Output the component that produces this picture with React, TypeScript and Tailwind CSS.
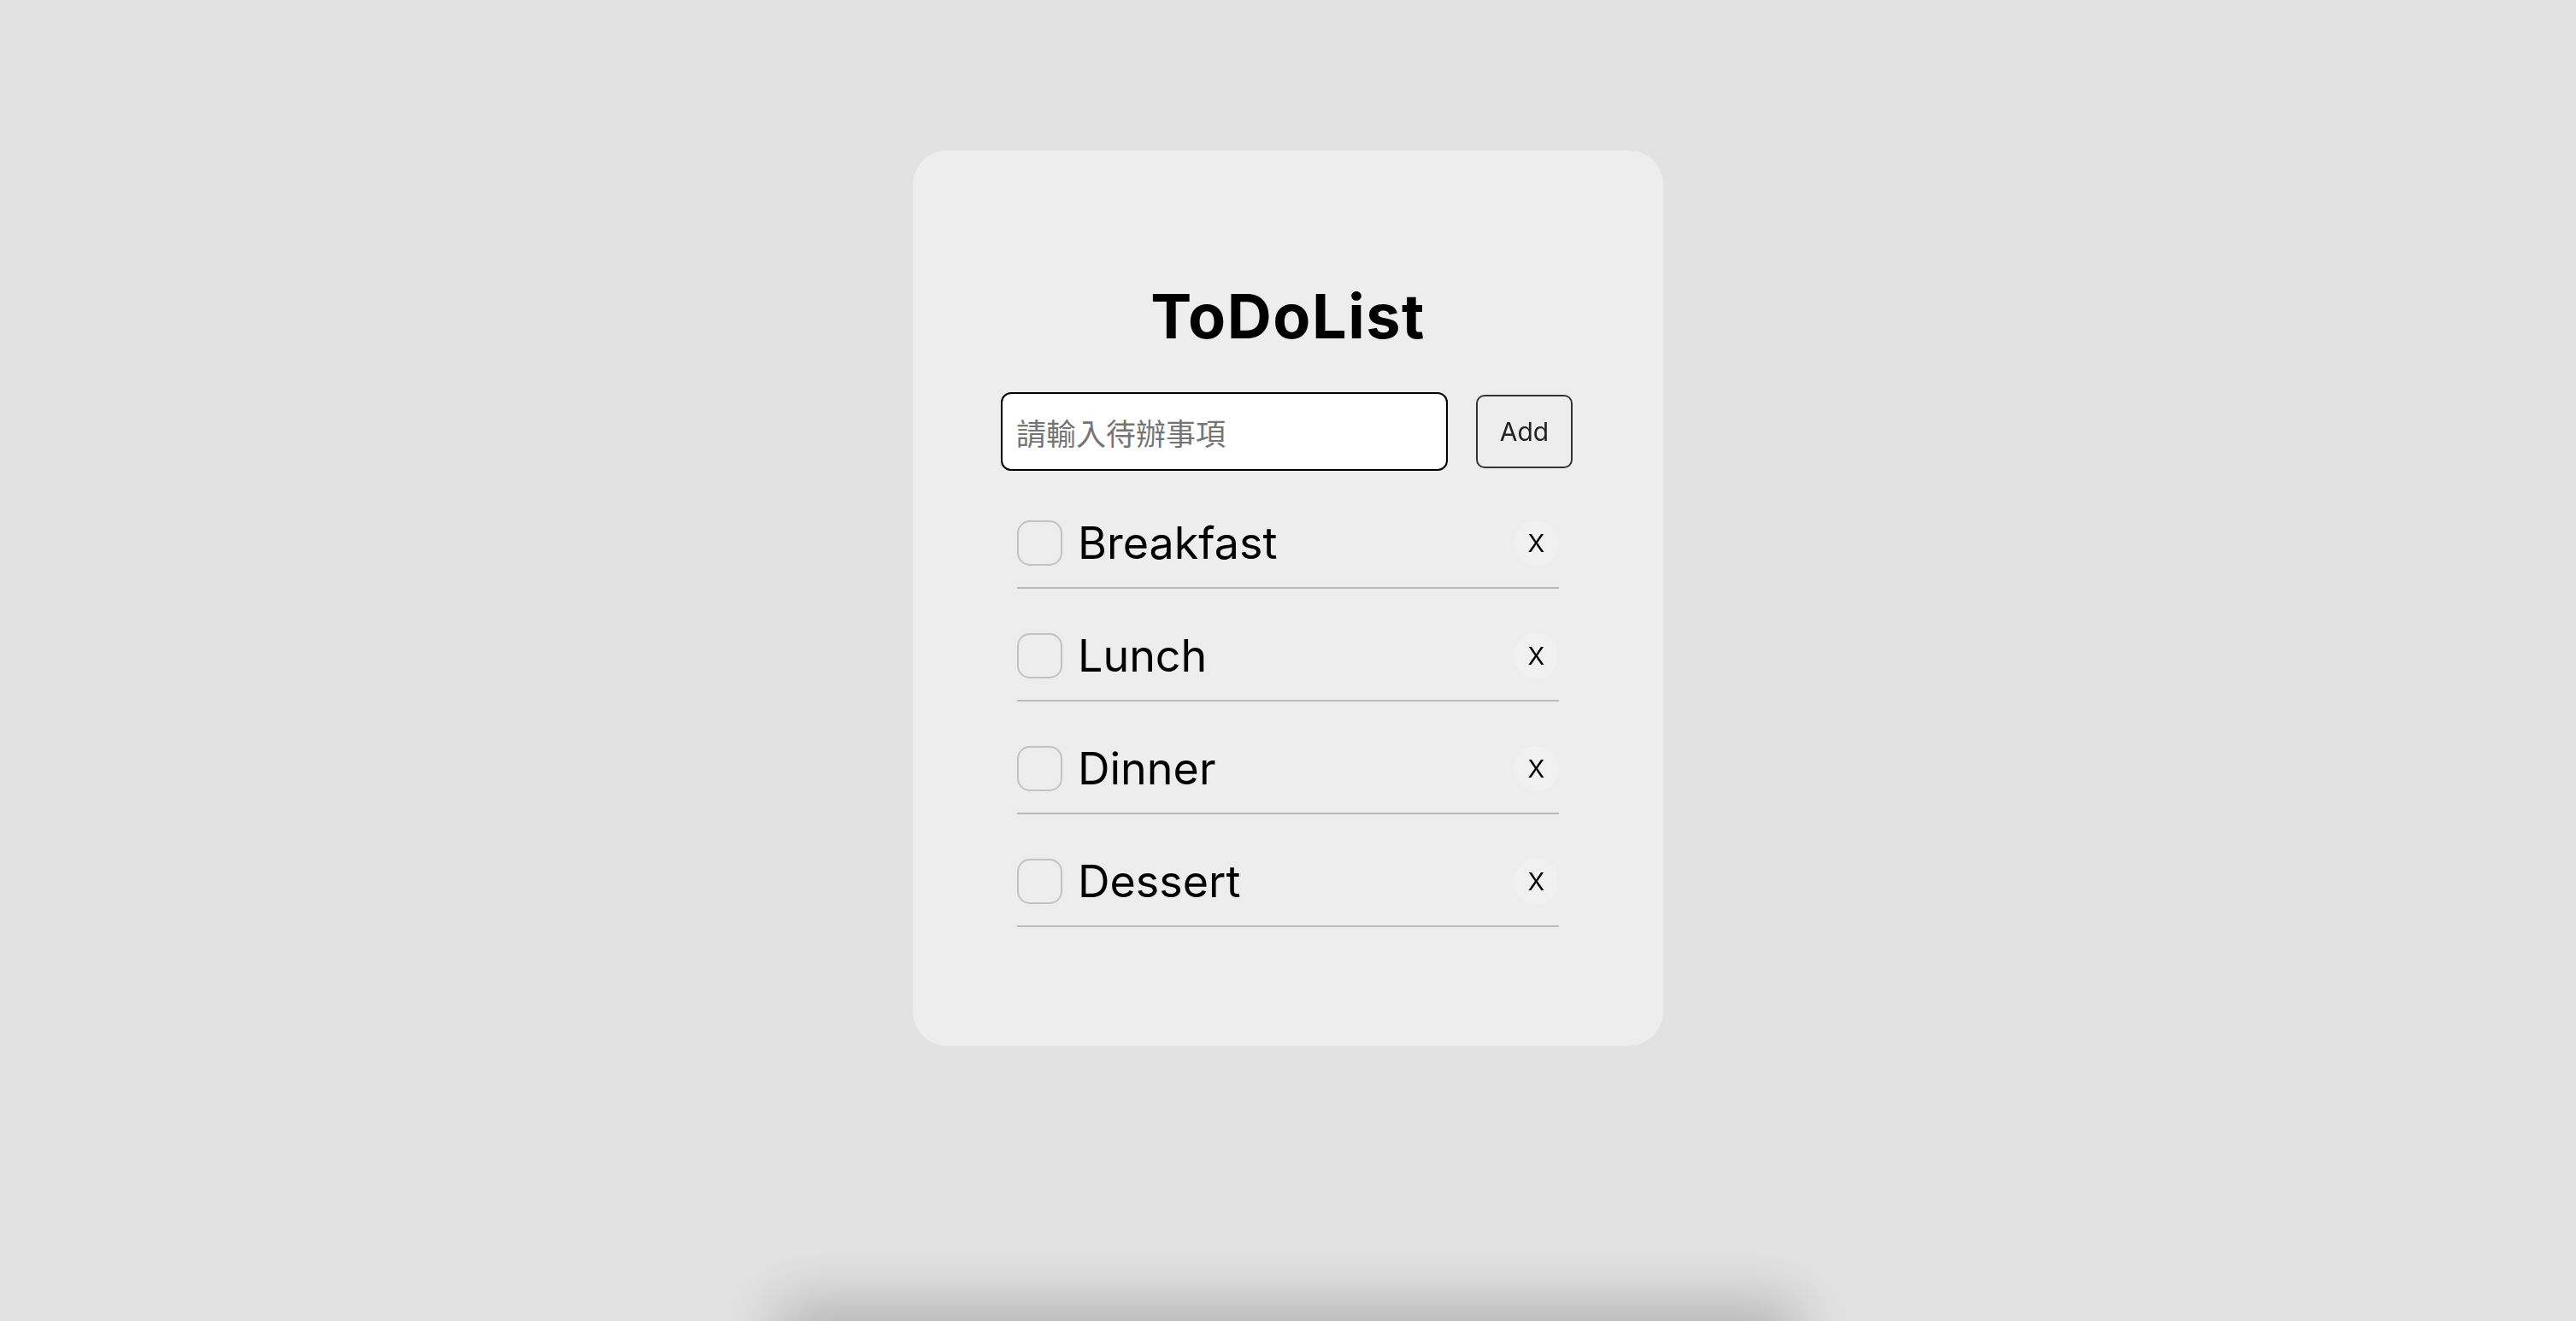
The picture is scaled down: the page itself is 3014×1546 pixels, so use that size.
import { useState } from 'react';

type Todo = { id: number; text: string; done: boolean };

const initialTodos: Todo[] = [
  { id: 1, text: 'Breakfast', done: false },
  { id: 2, text: 'Lunch', done: false },
  { id: 3, text: 'Dinner', done: false },
  { id: 4, text: 'Dessert', done: false },
];

export default function App() {
  const [todos, setTodos] = useState<Todo[]>(initialTodos);
  const [draft, setDraft] = useState('');

  const addTodo = () => {
    if (!draft.trim()) return;
    setTodos([...todos, { id: Date.now(), text: draft.trim(), done: false }]);
    setDraft('');
  };

  return (
    <div className="h-[1546px] w-full overflow-hidden bg-[#e2e2e2] flex flex-col items-center font-['Inter','Noto_Sans_CJK_TC',sans-serif]">
      {/* Card */}
      <div className="mt-[176px] w-[878px] h-[1048px] rounded-[40px] bg-[#ededed] flex flex-col items-center pt-[158px]">
        <h1 className="text-[72px] leading-none font-bold text-black tracking-[1.5px]">ToDoList</h1>

        {/* Input row */}
        <form
          onSubmit={(e) => {
            e.preventDefault();
            addTodo();
          }}
          className="mt-[53px] mr-[3px] flex items-center gap-[33px]"
        >
          <input
            type="text"
            autoFocus
            value={draft}
            onChange={(e) => setDraft(e.target.value)}
            placeholder="請輸入待辦事項"
            className="w-[523px] h-[92px] rounded-[12px] border-[2.5px] border-black bg-white pl-[16px] text-[35px] text-black caret-black placeholder:text-[#757575] outline-none font-['Noto_Sans_CJK_TC',sans-serif]"
          />
          <button
            type="submit"
            className="w-[113px] h-[86px] rounded-[10px] border-2 border-[#333] text-[30px] text-[#222] bg-transparent"
          >
            Add
          </button>
        </form>

        {/* List */}
        <ul className="mt-[58px] w-[634px] flex flex-col gap-[52px]">
          {todos.map((todo) => (
            <li key={todo.id} className="flex items-center pb-[25px] border-b-2 border-[#bababa]">
              <button
                onClick={() =>
                  setTodos(todos.map((t) => (t.id === todo.id ? { ...t, done: !t.done } : t)))
                }
                className="w-[53px] h-[53px] shrink-0 rounded-[15px] border-2 border-[#c2c2c2]"
                aria-label="toggle"
              />
              <span className="ml-[18px] flex-1 text-[52px] leading-none text-black">{todo.text}</span>
              <button
                onClick={() => setTodos(todos.filter((t) => t.id !== todo.id))}
                className="w-[53px] h-[53px] rounded-full bg-[#f0f0f0] text-[29px] text-black flex items-center justify-center"
              >
                X
              </button>
            </li>
          ))}
        </ul>
      </div>

      {/* Shadow from the element below the fold */}
      <div className="mt-auto w-[1150px] h-[60px] -mb-[60px] shrink-0 bg-[#bdbdbd] shadow-[0_0_70px_20px_rgba(0,0,0,0.22)]" />
    </div>
  );
}
